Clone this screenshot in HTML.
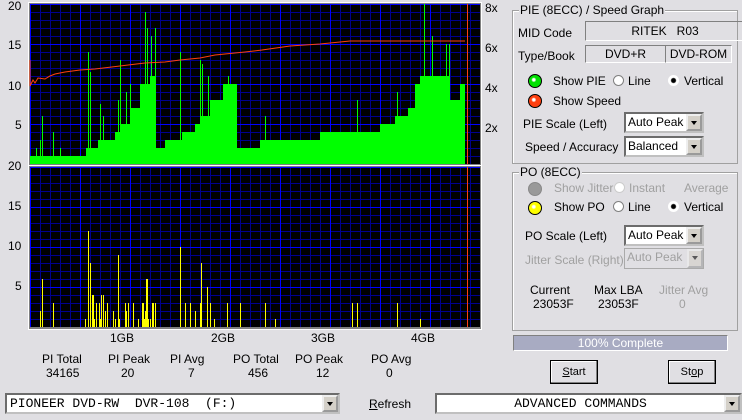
<!DOCTYPE html>
<html><head><style>
body{margin:0;width:742px;height:420px;background:#e0dfe3;font-family:"Liberation Sans",sans-serif;font-size:11px;color:#000;position:relative;overflow:hidden}
.a{position:absolute;white-space:nowrap}
.sunk{position:absolute;border:1px solid;border-color:#808080 #fff #fff #808080;box-sizing:border-box}
.combo{position:absolute;background:#fff;border:2px inset #c0c0c0;box-sizing:border-box;font-size:12px;padding:1px 2px}
.combo .btn{position:absolute;right:0;top:0;width:16px;bottom:0;background:#d4d0c8;border:2px outset #eee;box-sizing:border-box}
.combo .btn:after{content:"";position:absolute;left:3px;top:5px;border:3px solid transparent;border-top:4px solid #000;border-bottom:0}
.dis{color:#a0a0a0}
.grp{position:absolute;border:1px solid #a0a0a0;box-shadow:1px 1px 0 #fff inset}
.grp span{position:absolute;top:-8px;left:6px;background:#e0dfe3;padding:0 1px}
.btn2{position:absolute;background:#e0dfe3;border:1px solid #000;box-shadow:inset -1px -1px 0 #808080,inset 1px 1px 0 #fff;box-sizing:border-box;text-align:center;line-height:22px;font-size:11px}
.rad{position:absolute;width:11px;height:11px;border-radius:50%;background:#fff;border:1px solid #808080;box-sizing:border-box}
.led{position:absolute;width:14px;height:14px;border-radius:50%;border:1px solid #000;box-sizing:border-box}
</style></head><body>
<svg width="742" height="420" style="position:absolute;left:0;top:0" shape-rendering="crispEdges">
<defs>
<pattern id="g" x="30" y="4" width="50" height="40" patternUnits="userSpaceOnUse">
<rect width="50" height="40" fill="#000"/>
<path d="M10.5 0V40M20.5 0V40M30.5 0V40M40.5 0V40M0 8.5H50M0 16.5H50M0 24.5H50M0 32.5H50" stroke="#00008e" stroke-width="1"/>
<path d="M0.5 0V40M0 0.5H50" stroke="#0000ff" stroke-width="1"/>
</pattern>
<pattern id="g2" x="30" y="167" width="50" height="40" patternUnits="userSpaceOnUse">
<rect width="50" height="40" fill="#000"/>
<path d="M10.5 0V40M20.5 0V40M30.5 0V40M40.5 0V40M0 8.5H50M0 16.5H50M0 24.5H50M0 32.5H50" stroke="#00008e" stroke-width="1"/>
<path d="M0.5 0V40M0 0.5H50" stroke="#0000ff" stroke-width="1"/>
</pattern>
</defs>
<rect x="28.5" y="2.5" width="453" height="163" fill="none" stroke="#fff"/>
<rect x="29" y="3" width="452" height="162" fill="#808080"/>
<rect x="30" y="4" width="450" height="160" fill="url(#g)"/>
<rect x="28.5" y="165.5" width="453" height="164" fill="none" stroke="#fff"/>
<rect x="29" y="166" width="452" height="163" fill="#808080"/>
<rect x="30" y="167" width="450" height="160" fill="url(#g2)"/>
<path fill="#00ff00" d="M30 164V156H86V148H98V140H115V132H120V124H130V108H140V84H150V76H156V148H165V140H182V132H195V124H200V116H210V100H223V84H237V148H260V140H320V132H350V132H380V124H395V116H408V108H415V84H420V76H450V100H460V84H465V164Z"/>
<path stroke="#00ff00" stroke-width="1" d="M36.5 164V148M40.5 164V140M42.5 164V116M53.5 164V132M60.5 164V148M88.5 164V52M90.5 164V72M100.5 164V104M103.5 164V116M118.5 164V100M120.5 164V60M126.5 164V92M130.5 164V84M145.5 164V12M147.5 164V28M151.5 164V36M155.5 164V28M180.5 164V52M200.5 164V60M202.5 164V64M208.5 164V76M228.5 164V76M265.5 164V116M357.5 164V100M397.5 164V92M424.5 164V4M432.5 164V36M446.5 164V44M449.5 164V44"/>
<path fill="none" stroke="#ff4010" stroke-width="1" shape-rendering="auto" d="M30 60V86L33 80L35 83L38 78L45 79L50 76L55 74L65 72L80 70L95 69L120 66L145 63L165 62L180 60L200 58L215 55L245 52L262 50L290 46L320 44L350 41L378 41L465 41"/>
<path stroke="#ff4010" d="M467.5 4V164M467.5 167V327"/>
<path stroke="#ffff00" stroke-width="1" d="M40.5 327V311M42.5 327V279M53.5 327V303M85.5 327V319M88.5 327V231M90.5 327V263M92.5 327V295M93.5 327V295M94.5 327V319M96.5 327V303M99.5 327V303M100.5 327V319M101.5 327V295M103.5 327V295M105.5 327V311M107.5 327V303M113.5 327V311M115.5 327V319M118.5 327V255M119.5 327V319M125.5 327V303M126.5 327V311M128.5 327V303M133.5 327V303M138.5 327V319M142.5 327V303M143.5 327V303M144.5 327V319M145.5 327V311M146.5 327V279M147.5 327V279M148.5 327V319M150.5 327V319M152.5 327V303M153.5 327V303M155.5 327V303M180.5 327V247M185.5 327V303M190.5 327V303M195.5 327V311M200.5 327V303M201.5 327V263M207.5 327V287M210.5 327V303M214.5 327V319M227.5 327V303M240.5 327V303M265.5 327V303M275.5 327V319M352.5 327V303M357.5 327V303M397.5 327V303M420.5 327V319"/>
</svg>
<div class="a" style="left:8px;top:-1px;font-size:12px">20</div>
<div class="a" style="left:8px;top:38px;font-size:12px">15</div>
<div class="a" style="left:8px;top:79px;font-size:12px">10</div>
<div class="a" style="left:15px;top:118px;font-size:12px">5</div>
<div class="a" style="left:8px;top:159px;font-size:12px">20</div>
<div class="a" style="left:8px;top:199px;font-size:12px">15</div>
<div class="a" style="left:8px;top:239px;font-size:12px">10</div>
<div class="a" style="left:15px;top:279px;font-size:12px">5</div>
<div class="a" style="left:485px;top:1px;font-size:12px">8x</div>
<div class="a" style="left:485px;top:41px;font-size:12px">6x</div>
<div class="a" style="left:485px;top:81px;font-size:12px">4x</div>
<div class="a" style="left:485px;top:121px;font-size:12px">2x</div>
<div class="a" style="left:110px;top:331px;font-size:12px">1GB</div>
<div class="a" style="left:211px;top:331px;font-size:12px">2GB</div>
<div class="a" style="left:311px;top:331px;font-size:12px">3GB</div>
<div class="a" style="left:411px;top:331px;font-size:12px">4GB</div>
<div class="a" style="left:42px;top:352px;font-size:12px">PI Total</div><div class="a" style="left:46px;top:366px;font-size:12px">34165</div>
<div class="a" style="left:108px;top:352px;font-size:12px">PI Peak</div><div class="a" style="left:121px;top:366px;font-size:12px">20</div>
<div class="a" style="left:170px;top:352px;font-size:12px">PI Avg</div><div class="a" style="left:188px;top:366px;font-size:12px">7</div>
<div class="a" style="left:233px;top:352px;font-size:12px">PO Total</div><div class="a" style="left:248px;top:366px;font-size:12px">456</div>
<div class="a" style="left:295px;top:352px;font-size:12px">PO Peak</div><div class="a" style="left:316px;top:366px;font-size:12px">12</div>
<div class="a" style="left:371px;top:352px;font-size:12px">PO Avg</div><div class="a" style="left:386px;top:366px;font-size:12px">0</div>

<div class="grp" style="left:512px;top:10px;width:224px;height:152px"><span style="font-size:12px">PIE (8ECC) / Speed Graph</span></div>
<div class="a" style="left:518px;top:26px;font-size:12px">MID Code</div>
<div class="sunk" style="left:585px;top:21px;width:160px;height:20px;text-align:center;line-height:18px;font-size:12px">RITEK&nbsp;&nbsp;&nbsp;R03</div>
<div class="a" style="left:518px;top:49px;font-size:12px">Type/Book</div>
<div class="sunk" style="left:585px;top:45px;width:81px;height:18px;text-align:center;line-height:16px;font-size:12px">DVD+R</div>
<div class="sunk" style="left:665px;top:45px;width:67px;height:18px;text-align:center;line-height:16px;font-size:12px">DVD-ROM</div>
<div class="led" style="left:528px;top:74px;background:radial-gradient(circle at 40% 40%,#fff 0 12%,#00e000 25%)"></div>
<div class="a" style="left:553px;top:74px;font-size:12px">Show PIE</div>
<div class="rad" style="left:613px;top:75px"></div><div class="a" style="left:628px;top:74px;font-size:12px">Line</div>
<div class="rad" style="left:668px;top:75px;border:none;background:radial-gradient(circle,#000 0 2px,#fff 3px)"></div><div class="a" style="left:684px;top:74px;font-size:12px">Vertical</div>
<div class="led" style="left:528px;top:94px;background:radial-gradient(circle at 40% 40%,#fff 0 12%,#ff4010 25%)"></div>
<div class="a" style="left:553px;top:94px;font-size:12px">Show Speed</div>
<div class="a" style="left:523px;top:117px;font-size:12px">PIE Scale (Left)</div>
<div class="combo" style="left:624px;top:112px;width:80px;height:21px">Auto Peak<div class="btn"></div></div>
<div class="a" style="left:525px;top:140px;font-size:12px">Speed / Accuracy</div>
<div class="combo" style="left:624px;top:136px;width:80px;height:21px">Balanced<div class="btn"></div></div>

<div class="grp" style="left:512px;top:172px;width:224px;height:157px"><span style="font-size:12px">PO (8ECC)</span></div>
<div class="led" style="left:528px;top:182px;background:#999;border-color:#888"></div>
<div class="a dis" style="left:554px;top:181px;font-size:12px">Show Jitter</div>
<div class="rad" style="left:614px;top:182px;border-color:#ccc"></div><div class="a dis" style="left:629px;top:181px;font-size:12px">Instant</div>
<div class="a dis" style="left:684px;top:181px;font-size:12px">Average</div>
<div class="led" style="left:528px;top:201px;background:radial-gradient(circle at 40% 40%,#fff 0 12%,#ffff00 25%)"></div>
<div class="a" style="left:554px;top:200px;font-size:12px">Show PO</div>
<div class="rad" style="left:613px;top:201px"></div><div class="a" style="left:628px;top:200px;font-size:12px">Line</div>
<div class="rad" style="left:668px;top:201px;border:none;background:radial-gradient(circle,#000 0 2px,#fff 3px)"></div><div class="a" style="left:684px;top:200px;font-size:12px">Vertical</div>
<div class="a" style="left:525px;top:229px;font-size:12px">PO Scale (Left)</div>
<div class="combo" style="left:624px;top:225px;width:80px;height:21px">Auto Peak<div class="btn"></div></div>
<div class="a dis" style="left:525px;top:253px;font-size:12px">Jitter Scale (Right)</div>
<div class="combo dis" style="left:624px;top:248px;width:80px;height:21px;background:#e0dfe3;border:1px solid #aaa">Auto Peak<div class="btn" style="opacity:.6"></div></div>
<div class="a" style="left:530px;top:283px;font-size:12px">Current</div><div class="a" style="left:533px;top:297px;font-size:12px">23053F</div>
<div class="a" style="left:594px;top:283px;font-size:12px">Max LBA</div><div class="a" style="left:598px;top:297px;font-size:12px">23053F</div>
<div class="a dis" style="left:659px;top:283px;font-size:12px">Jitter Avg</div><div class="a dis" style="left:679px;top:297px;font-size:12px">0</div>
<div class="sunk" style="left:513px;top:335px;width:215px;height:16px;background:#a8abc2;color:#fff;text-align:center;line-height:14px;font-size:12px">100% Complete</div>
<div class="btn2" style="left:550px;top:360px;width:48px;height:24px"><u>S</u>tart</div>
<div class="btn2" style="left:668px;top:360px;width:48px;height:24px">St<u>o</u>p</div>
<div class="combo" style="left:5px;top:393px;width:335px;height:21px;font-family:'Liberation Mono',monospace;font-size:13px;padding:1px 3px">PIONEER DVD-RW&nbsp;&nbsp;DVR-108&nbsp;&nbsp;(F:)<div class="btn"></div></div>
<div class="a" style="left:369px;top:397px;font-size:12px"><u>R</u>efresh</div>
<div class="combo" style="left:435px;top:393px;width:307px;height:21px;font-family:'Liberation Mono',monospace;font-size:13px;text-align:center;padding-right:18px">ADVANCED COMMANDS<div class="btn"></div></div>
</body></html>
